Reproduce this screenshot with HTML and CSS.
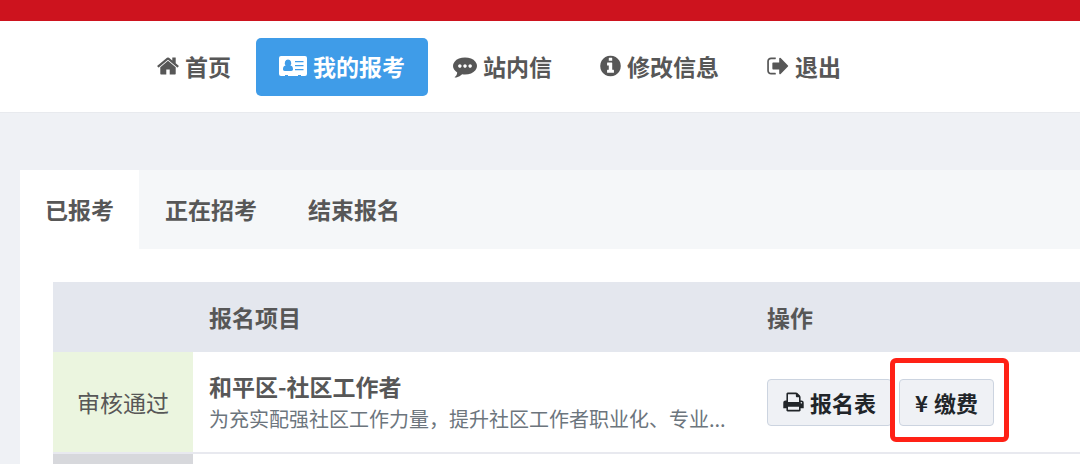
FILE: index.html
```
<!DOCTYPE html>
<html lang="zh-CN">
<head>
    <meta charset="UTF-8">
    <meta name="viewport" content="width=device-width, initial-scale=1.0">
    <title>我的报考</title>
    <link rel="stylesheet" href="styles.css">
</head>
<body>
    <header class="header">
        <nav class="nav">
            <a class="nav-link" href="#">
                <svg class="icon" width="22" height="24" viewBox="75 0 1642 1792" aria-hidden="true"><path d="M1472 992v480q0 26-19 45t-45 19h-384v-384h-256v384h-384q-26 0-45-19t-19-45v-480q0-1 .5-3t.5-3l575-474 575 474q1 2 1 6zm223-69l-62 74q-8 9-21 11h-3q-13 0-21-7l-692-577-692 577q-12 8-24 7-13-2-21-11l-62-74q-8-10-7-23.5t11-21.5l719-599q32-26 76-26t76 26l244 204v-195q0-14 9-23t23-9h192q14 0 23 9t9 23v408l219 182q10 8 11 21.5t-7 23.5z"/></svg>
                首页
            </a>
            <a class="nav-link active" href="#">
                <svg class="icon" width="28" height="24" viewBox="0 0 28 24" aria-hidden="true"><path fill-rule="evenodd" d="M2 2h24a2 2 0 0 1 2 2v16a2 2 0 0 1-2 2h-4v-1h-3v1H9v-1H6v1H2a2 2 0 0 1-2-2V4a2 2 0 0 1 2-2zM9 5.500a3.200 3.600 0 0 0-2.400 6C4.500 11.700 4 13.500 4 15.300 4 16.500 4.700 17 5.700 17h6.600c1 0 1.700-.5 1.700-1.700 0-1.800-.5-3.600-2.600-3.800A3.200 3.600 0 0 0 9 5.500zM16 7h8.500v1.300H16zM16 11h8.500v1.300H16zM16 15h8.500v1.300H16z"/></svg>
                我的报考
            </a>
            <a class="nav-link" href="#">
                <svg class="icon" width="24" height="24" viewBox="0 0 1792 1792" aria-hidden="true"><path d="M640 896q0-53-37.500-90.500t-90.500-37.500-90.500 37.500-37.500 90.500 37.500 90.500 90.500 37.500 90.500-37.500 37.500-90.500zm384 0q0-53-37.500-90.500t-90.500-37.500-90.500 37.500-37.500 90.500 37.500 90.500 90.500 37.500 90.500-37.500 37.500-90.500zm384 0q0-53-37.500-90.500t-90.500-37.500-90.500 37.500-37.500 90.500 37.500 90.500 90.500 37.500 90.500-37.500 37.500-90.500zm384 0q0 174-120 321.500t-326 233-450 85.500q-110 0-211-18-173 173-435 229-52 10-86 13-12 1-22-6t-13-18q-4-15 20-37 5-5 23.500-21.500t25.500-23.500 23.500-25.500 24-31.500 20.500-37 20-48 14.500-57.500 12.500-72.500q-146-90-229.500-216.500t-83.500-269.500q0-174 120-321.500t326-233 450-85.500 450 85.500 326 233 120 321.500z"/></svg>
                站内信
            </a>
            <a class="nav-link" href="#">
                <svg class="icon" width="21" height="24" viewBox="128 0 1536 1792" aria-hidden="true"><path d="M1152 1376v-160q0-14-9-23t-23-9h-96v-512q0-14-9-23t-23-9h-320q-14 0-23 9t-9 23v160q0 14 9 23t23 9h96v320h-96q-14 0-23 9t-9 23v160q0 14 9 23t23 9h448q14 0 23-9t9-23zm-128-896v-160q0-14-9-23t-23-9h-192q-14 0-23 9t-9 23v160q0 14 9 23t23 9h192q14 0 23-9t9-23zm640 416q0 209-103 385.500t-279.500 279.500-385.500 103-385.500-103-279.500-279.500-103-385.500 103-385.500 279.500-279.500 385.500-103 385.500 103 279.500 279.500 103 385.500z"/></svg>
                修改信息
            </a>
            <a class="nav-link" href="#">
                <svg class="icon" width="22" height="24" viewBox="60 0 1620 1792" aria-hidden="true"><path d="M704 1440q0 4 1 20t.5 26.500-3 23.500-10 19.500-20.500 6.500h-320q-119 0-203.500-84.500t-84.500-203.500v-704q0-119 84.500-203.500t203.500-84.500h320q13 0 22.500 9.500t9.500 22.500q0 4 1 20t.5 26.500-3 23.500-10 19.500-20.500 6.500h-320q-66 0-113 47t-47 113v704q0 66 47 113t113 47h312l11.500 1 11.500 3 8 5.500 7 9 2 13.500zm928-544q0 26-19 45l-544 544q-19 19-45 19t-45-19-19-45v-288h-448q-26 0-45-19t-19-45v-384q0-26 19-45t45-19h448v-288q0-26 19-45t45-19 45 19l544 544q19 19 19 45z"/></svg>
                退出
            </a>
        </nav>
    </header>

    <main class="panel">
        <div class="tabs" role="tablist">
            <button class="tab active" type="button" role="tab" aria-selected="true">已报考</button>
            <button class="tab" type="button" role="tab" aria-selected="false">正在招考</button>
            <button class="tab" type="button" role="tab" aria-selected="false">结束报名</button>
        </div>

        <div class="panel-body">
            <table class="exam-table">
                <thead>
                    <tr>
                        <th class="col-status"></th>
                        <th class="col-project">报名项目</th>
                        <th>操作</th>
                    </tr>
                </thead>
                <tbody>
                    <tr>
                        <td class="status status-pass">审核通过</td>
                        <td>
                            <div class="project-name">和平区-社区工作者</div>
                            <div class="project-desc">为充实配强社区工作力量，提升社区工作者职业化、专业...</div>
                        </td>
                        <td>
                            <div class="actions">
                                <button class="btn" type="button">
                                    <svg class="icon" width="21" height="22" viewBox="64 0 1664 1792" aria-hidden="true"><path d="M448 1536h896v-256h-896v256zm0-640h896v-384h-160q-40 0-68-28t-28-68v-160h-640v640zm1152 64q0-26-19-45t-45-19-45 19-19 45 19 45 45 19 45-19 19-45zm128 0v416q0 13-9.500 22.500t-22.500 9.500h-224v160q0 40-28 68t-68 28h-960q-40 0-68-28t-28-68v-160h-224q-13 0-22.500-9.500t-9.500-22.500v-416q0-79 56.500-135.500t135.500-56.500h64v-544q0-40 28-68t68-28h672q40 0 88 20t76 48l152 152q28 28 48 76t20 88v256h64q79 0 135.500 56.500t56.500 135.500z"/></svg>
                                    报名表
                                </button>
                                <div class="highlight">
                                    <button class="btn" type="button"><span class="yen">¥</span>缴费</button>
                                </div>
                            </div>
                        </td>
                    </tr>
                    <tr>
                        <td class="status status-closed"></td>
                        <td></td>
                        <td></td>
                    </tr>
                </tbody>
            </table>
        </div>
    </main>
</body>
</html>
```

FILE: styles.css
```
* {
    box-sizing: border-box;
}

body {
    margin: 0;
    height: 100vh;
    overflow: hidden;
    font-family: "Noto Sans CJK SC", sans-serif;
    font-size: 23px;
    line-height: 34px;
    color: #575757;
    background: #eff1f5;
}

.icon {
    flex: none;
    fill: currentColor;
}

.header {
    border-top: 21px solid #cd131e;
    border-bottom: 1px solid #e8eaee;
    background: #fff;
}

.nav {
    display: flex;
    gap: 1px;
    padding: 17px 0 16px 134px;
}

.nav-link {
    display: flex;
    align-items: center;
    gap: 6px;
    padding: 11px 23px 13px;
    border-radius: 5px;
    font-weight: bold;
    color: #575757;
    text-decoration: none;
}

.nav-link.active {
    background: #3f9ce8;
    color: #fff;
}

.nav-link + .nav-link {
    margin-left: 1px;
}

.panel {
    margin: 57px 0 0 20px;
    background: #fff;
}

.tabs {
    display: flex;
    gap: 1px;
    background: #f5f7f9;
}

.tab {
    padding: 22px 25px 23px;
    border: none;
    background: none;
    font: inherit;
    font-weight: bold;
    color: inherit;
    cursor: pointer;
}

.tab.active {
    background: #fff;
}

.panel-body {
    padding: 33px 0 0 33px;
}

.exam-table {
    width: 100%;
    table-layout: fixed;
    border-collapse: separate;
    border-spacing: 0;
}

.exam-table th {
    height: 70px;
    padding: 0 16px;
    background: #e4e7ee;
    text-align: left;
}

.exam-table td {
    height: 102px;
    padding: 0 16px;
    border-bottom: 2px solid #e8e9ef;
}

.col-status {
    width: 140px;
}

.col-project {
    width: 558px;
}

.exam-table .status {
    text-align: center;
}

.status-pass {
    background: #ebf5df;
}

.status-closed {
    background: #d7d8dc;
}

.project-name {
    font-weight: bold;
}

.project-desc {
    font-size: 20px;
    line-height: 32px;
    color: #6c757d;
    white-space: nowrap;
}

.actions {
    display: flex;
    gap: 7px;
}

.btn {
    display: flex;
    align-items: center;
    gap: 6px;
    padding: 5px 15px 6px;
    border: 1px solid #ccd4e0;
    border-radius: 4px;
    background: #eff1f5;
    font: inherit;
    font-size: 22px;
    font-weight: bold;
    color: #212529;
    cursor: pointer;
}

/* red frame around the payment button */
.highlight {
    position: relative;
}

.highlight::after {
    content: "";
    position: absolute;
    inset: -21px -15px -16px -9px;
    border: 5px solid #ff2116;
    border-radius: 6px;
    pointer-events: none;
}
```
